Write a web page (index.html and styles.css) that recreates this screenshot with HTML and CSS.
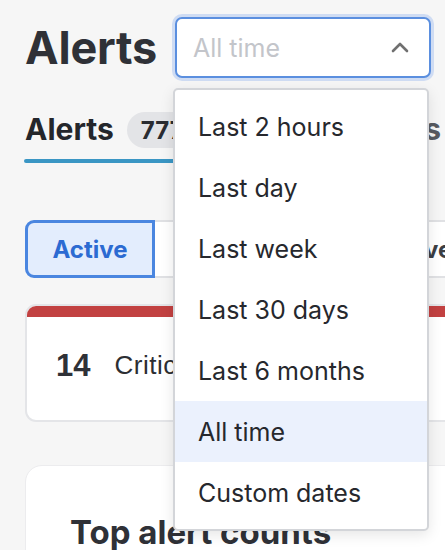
FILE: index.html
```html
<!DOCTYPE html>
<html lang="en">
<head>
<meta charset="utf-8">
<title>Alerts</title>
<link rel="stylesheet" href="styles.css">
</head>
<body>
<div class="page">
  <header class="head">
    <h1 class="title">Alerts</h1>
    <div class="select-wrap">
      <div class="select">
        <span class="placeholder">All time</span>
        <svg class="chev" width="18" height="12" viewBox="0 0 18 12"><path d="M2 10 L9 3 L16 10" fill="none" stroke="#707070" stroke-width="2.6" stroke-linecap="round" stroke-linejoin="round"/></svg>
      </div>
      <ul class="menu">
        <li class="item">Last 2 hours</li>
        <li class="item">Last day</li>
        <li class="item">Last week</li>
        <li class="item">Last 30 days</li>
        <li class="item">Last 6 months</li>
        <li class="item selected">All time</li>
        <li class="item">Custom dates</li>
      </ul>
    </div>
  </header>

  <nav class="tabs">
    <div class="tab active">
      <div class="tab-row"><span class="tab-label">Alerts</span><span class="badge">777</span></div>
      <div class="tab-line"></div>
    </div>
    <div class="tab">
      <div class="tab-row"><span class="tab-label muted">Configurations</span></div>
    </div>
  </nav>

  <div class="segments">
    <div class="seg on">Active</div>
    <div class="seg">Resolved</div>
    <div class="seg">Inactive</div>
  </div>

  <section class="card summary">
    <div class="bar"></div>
    <div class="summary-body"><span class="count">14</span><span class="sev">Critical</span></div>
  </section>

  <section class="card top">
    <h2 class="card-title">Top alert counts</h2>
  </section>
</div>
</body>
</html>
```

FILE: styles.css
```css
* { box-sizing: border-box; }
html, body { margin: 0; padding: 0; }
body {
  background: #f6f6f6;
  overflow: hidden;
  width: 445px;
  height: 550px;
  font-family: Inter, "Noto Sans", sans-serif;
  color: #2f3137;
}
.page {
  width: 640px;
  padding: 17px 0 0 25px;
}
.head {
  display: flex;
  align-items: center;
  gap: 18px;
}
.title {
  margin: 0;
  font-size: 45px;
  font-weight: 700;
  line-height: 1;
  color: #2f3137;
  letter-spacing: -0.2px;
}
.select-wrap {
  position: relative;
}
.select {
  width: 256px;
  height: 61px;
  border: 2px solid #5b8fdf;
  border-radius: 7px;
  background: #fff;
  box-shadow: 0 0 0 3px #cfdcf3;
  display: flex;
  align-items: center;
  justify-content: space-between;
  padding: 0 20px 0 16px;
}
.placeholder {
  font-size: 25px;
  color: #c3c5ca;
}
.chev { display: block; margin-top: -2px; }
.menu {
  position: absolute;
  top: 71px;
  left: -2px;
  width: 256px;
  margin: 0;
  padding: 6px 0;
  list-style: none;
  background: #fff;
  border: 2px solid #d3d5d9;
  border-radius: 5px;
  box-shadow: 0 4px 14px rgba(0,0,0,0.10);
  z-index: 5;
}
.item {
  height: 61px;
  display: flex;
  align-items: center;
  padding-left: 23px;
  font-size: 25px;
  color: #26282d;
}
.item.selected { background: #ebf1fd; }

.tabs {
  display: flex;
  gap: 24px;
  margin-top: 34px;
}
.tab { display: flex; flex-direction: column; }
.tab-row {
  display: flex;
  align-items: center;
  gap: 13px;
  height: 36px;
}
.tab-label {
  font-size: 30px;
  font-weight: 700;
  color: #24262b;
  margin-top: -3px;
}
.tab-label.muted { color: #575a60; }
.badge {
  height: 36px;
  border-radius: 18px;
  background: #e3e4e7;
  padding: 0 14px;
  display: flex;
  align-items: center;
  font-size: 24px;
  font-weight: 700;
  color: #2a2c31;
}
.tab-line {
  margin-top: 11px;
  height: 4px;
  border-radius: 2px;
  background: #3a96c4;
  margin-left: -1px;
}

.segments {
  display: flex;
  margin-top: 57px;
  height: 58px;
}
.seg {
  display: flex;
  align-items: center;
  padding: 0 32px;
  font-size: 24px;
  font-weight: 700;
  color: #3b3e44;
  background: #fff;
  border-top: 2px solid #e0e1e4;
  border-bottom: 2px solid #e0e1e4;
}
.seg.on {
  width: 130px;
  justify-content: center;
  padding: 0;
  background: #e3edfd;
  color: #2c6bd2;
  border: 3px solid #4a86e0;
  border-radius: 9px 0 0 9px;
}

.card {
  background: #fff;
}
.summary {
  margin-top: 26px;
  height: 118px;
  border: 2px solid #e4e5e8;
  border-radius: 11px;
  overflow: hidden;
  display: flex;
  flex-direction: column;
  font-family: "Liberation Sans", Arial, sans-serif;
}
.bar { height: 11px; background: #c24141; }
.summary-body {
  flex: 1;
  display: flex;
  align-items: center;
  gap: 24px;
  padding: 0 0 6px 29px;
}
.count {
  font-size: 31px;
  font-weight: 700;
  color: #2f3137;
}
.sev {
  font-size: 26px;
  letter-spacing: 0.5px;
  color: #2c2e33;
}
.top {
  margin-top: 43px;
  height: 200px;
  border: 1px solid #ececee;
  border-radius: 17px;
  padding: 47px 0 0 44px;
}
.card-title {
  margin: 0;
  font-size: 33px;
  font-weight: 700;
  color: #2f3137;
  line-height: 1.2;
}
```
